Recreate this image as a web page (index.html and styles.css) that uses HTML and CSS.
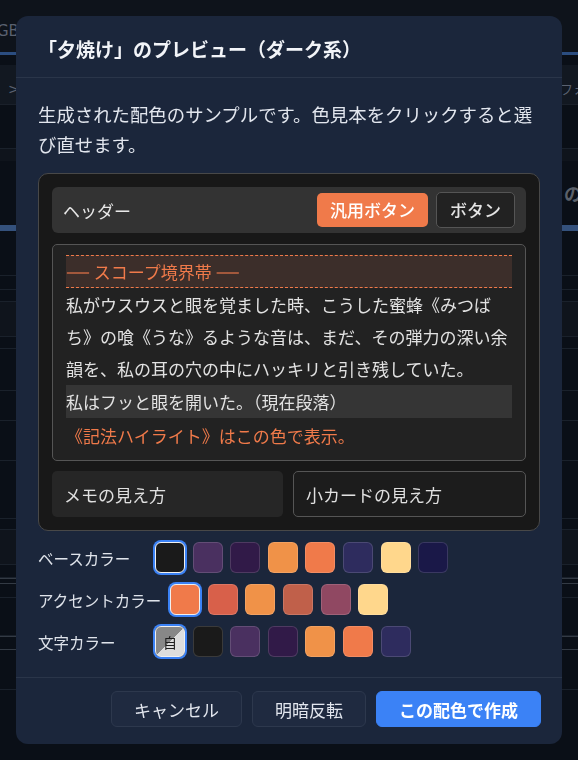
FILE: index.html
```html
<!DOCTYPE html>
<html lang="ja">
<head>
<meta charset="utf-8">
<title>プレビュー</title>
<link rel="stylesheet" href="styles.css">
</head>
<body>
<div class="app">
  <div class="app-top"><span class="app-gb">GB</span></div>
  <div class="app-tabline"></div>
  <div class="app-tabs"><span class="app-chev">&gt;</span><span class="app-fo">フォ</span></div>
  <div class="app-row h30"></div>
  <div class="app-row h14 line"></div>
  <div class="app-row h12 light"></div>
  <div class="app-row h64"><span class="app-no">の</span></div>
  <div class="app-sel"></div>
  <div class="app-row h45 line"></div>
  <div class="app-row h14 line"></div>
  <div class="app-row h12 line"></div>
  <div class="app-row h35 light line"></div>
  <div class="app-row h12 line"></div>
  <div class="app-row h42 line"></div>
  <div class="app-row h30 line"></div>
  <div class="app-row h40 line"></div>
  <div class="app-row h58 line"></div>
  <div class="app-row h11 line"></div>
  <div class="app-row h35 light line"></div>
  <div class="app-row h13 line"></div>
  <div class="app-row h6 dbl"></div>
  <div class="app-row h14 line"></div>
  <div class="app-row h38 line"></div>
  <div class="app-row h14 dbl"></div>
  <div class="app-row h40 line"></div>
</div>

<div class="overlay">
  <div class="modal">
    <div class="modal-head">
      <h2 class="modal-title">「夕焼け」のプレビュー（ダーク系）</h2>
    </div>
    <div class="modal-body">
      <p class="desc">生成された配色のサンプルです。色見本をクリックすると選び直せます。</p>

      <div class="preview">
        <div class="pv-header">
          <span class="pv-header-title">ヘッダー</span>
          <div class="pv-btns">
            <button class="pv-btn pv-btn-primary">汎用ボタン</button>
            <button class="pv-btn pv-btn-secondary">ボタン</button>
          </div>
        </div>

        <div class="pv-text">
          <div class="pv-scope"><span class="pv-dash">——</span> スコープ境界帯 <span class="pv-dash">——</span></div>
          <p class="pv-para">私がウスウスと眼を覚ました時、こうした蜜蜂《みつば<br>ち》の喰《うな》るような音は、まだ、その弾力の深い余韻を、私の耳の穴の中にハッキリと引き残していた。</p>
          <p class="pv-para pv-current">私はフッと眼を開いた。（現在段落）</p>
          <p class="pv-para pv-hl">《記法ハイライト》はこの色で表示。</p>
        </div>

        <div class="pv-cards">
          <div class="pv-memo">メモの見え方</div>
          <div class="pv-card">小カードの見え方</div>
        </div>
      </div>

      <div class="swatch-rows">
        <div class="swatch-row">
          <span class="swatch-label">ベースカラー</span>
          <div class="swatch-list">
            <span class="swatch selected c-1a"></span>
            <span class="swatch c-4a"></span>
            <span class="swatch c-30"></span>
            <span class="swatch c-f09"></span>
            <span class="swatch c-f07"></span>
            <span class="swatch c-2e"></span>
            <span class="swatch c-ffd"></span>
            <span class="swatch c-1a4"></span>
          </div>
        </div>
        <div class="swatch-row">
          <span class="swatch-label">アクセントカラー</span>
          <div class="swatch-list">
            <span class="swatch selected c-f07"></span>
            <span class="swatch c-d86"></span>
            <span class="swatch c-f09"></span>
            <span class="swatch c-c06"></span>
            <span class="swatch c-904"></span>
            <span class="swatch c-ffd"></span>
          </div>
        </div>
        <div class="swatch-row">
          <span class="swatch-label">文字カラー</span>
          <div class="swatch-list">
            <span class="swatch selected swatch-auto"><span class="swatch-auto-text">自</span></span>
            <span class="swatch c-1a"></span>
            <span class="swatch c-4a"></span>
            <span class="swatch c-30"></span>
            <span class="swatch c-f09"></span>
            <span class="swatch c-f07"></span>
            <span class="swatch c-2e"></span>
          </div>
        </div>
      </div>
    </div>
    <div class="modal-foot">
      <button class="foot-btn foot-btn-secondary">キャンセル</button>
      <button class="foot-btn foot-btn-secondary">明暗反転</button>
      <button class="foot-btn foot-btn-primary">この配色で作成</button>
    </div>
  </div>
</div>
</body>
</html>
```

FILE: styles.css
```css
* { box-sizing: border-box; }

html, body {
  margin: 0;
  padding: 0;
  height: 100%;
  overflow: hidden;
}

body {
  background: #0a0f17;
  font-family: "Noto Sans CJK JP", "Noto Sans", sans-serif;
  color: #e2e6ee;
}

/* ---------- dimmed app behind ---------- */
.app {
  display: flex;
  flex-direction: column;
  background: #0a0f17;
}
.app-top {
  height: 52px;
  background: #0e131b;
  display: flex;
  align-items: center;
  padding-top: 10px;
}
.app-gb {
  margin-left: -3px;
  font-family: "DejaVu Sans", sans-serif;
  font-size: 15px;
  color: #5a6170;
}
.app-tabline {
  height: 3px;
  background: #2b4d80;
}
.app-tabs {
  height: 40px;
  background: #121821;
  border-bottom: 1px solid #1a202a;
  display: flex;
  align-items: center;
  justify-content: space-between;
  padding-top: 8px;
  margin-top: 10px;
}
.app-chev {
  margin-left: 8px;
  color: #5a6170;
  font-family: "DejaVu Sans", sans-serif;
  font-size: 14px;
}
.app-fo {
  margin-right: -8px;
  color: #5a6170;
  font-size: 13px;
}
.app-row {
  border-bottom: 1px solid transparent;
}
.app-row.line { border-bottom-color: #1a212b; }
.app-row.light { background: #0f141c; }
.app-row.dbl {
  border-top: 1px solid #333a44;
  border-bottom: 1px solid #333a44;
}
.h6 { height: 6px; }
.h11 { height: 11px; }
.h12 { height: 12px; }
.h13 { height: 13px; }
.h14 { height: 14px; }
.h30 { height: 30px; }
.h35 { height: 35px; }
.h38 { height: 38px; }
.h40 { height: 40px; }
.h42 { height: 42px; }
.h45 { height: 45px; }
.h58 { height: 58px; }
.h64 {
  height: 64px;
  display: flex;
  justify-content: flex-end;
  align-items: center;
}
.app-no {
  margin-right: -4px;
  font-size: 18px;
  font-weight: 700;
  color: #5a606a;
}
.app-sel {
  height: 6px;
  background: #34517c;
}

/* ---------- overlay / modal ---------- */
.overlay {
  position: fixed;
  inset: 0;
  display: flex;
  align-items: center;
  justify-content: center;
  padding: 16px;
}
.modal {
  width: 100%;
  height: 100%;
  background: #1b263b;
  border-radius: 12px;
  display: flex;
  flex-direction: column;
  overflow: hidden;
}
.modal-head {
  padding: 20px 22px 15px;
  border-bottom: 1px solid #2a3549;
}
.modal-title {
  margin: 0;
  font-size: 19px;
  line-height: 26px;
  font-weight: 700;
  color: #f2f4f8;
}
.modal-body {
  flex: 1;
  padding: 21px 22px 0;
  display: flex;
  flex-direction: column;
}
.desc {
  margin: 0 0 14px;
  font-size: 18.4px;
  line-height: 30px;
  color: #e2e6ee;
}

/* ---------- preview ---------- */
.preview {
  background: #181818;
  border: 1px solid #484848;
  border-radius: 10px;
  padding: 13px 13px 13px;
  display: flex;
  flex-direction: column;
  gap: 10px;
}
.pv-header {
  height: 46px;
  background: #333333;
  border-radius: 6px;
  display: flex;
  align-items: center;
  justify-content: space-between;
  padding: 0 11px 0 11px;
  margin-bottom: 1px;
}
.pv-header-title {
  font-size: 17px;
  color: #e8e8e8;
}
.pv-btns {
  display: flex;
  align-items: center;
  gap: 8px;
}
.pv-btn {
  font-family: inherit;
  font-size: 17px;
  line-height: 24px;
  padding: 0 13px;
  border-radius: 5px;
  cursor: pointer;
}
.pv-btn-primary {
  height: 34px;
  background: #f07a4a;
  border: none;
  color: #ffffff;
  font-weight: 500;
}
.pv-btn-secondary {
  height: 36px;
  background: #222222;
  border: 1px solid #555555;
  color: #e4e4e4;
  font-weight: 500;
}

.pv-text {
  background: #222222;
  border: 1px solid #555555;
  border-radius: 5px;
  padding: 10px 13px 8px;
}
.pv-scope {
  height: 33px;
  background: #3c2e2a;
  border-top: 1px dashed #f07a4a;
  border-bottom: 1px dashed #f07a4a;
  color: #f07a4a;
  font-size: 17px;
  line-height: 31px;
  margin-bottom: 1px;
}
.pv-dash {
  font-size: 12px;
  font-weight: 700;
  vertical-align: 1px;
  text-shadow: 0 1px 0 currentColor;
}
.pv-para {
  margin: 0;
  font-size: 17px;
  line-height: 32px;
  color: #e2e2e2;
}
.pv-current {
  background: #353535;
  line-height: 33px;
}
.pv-hl {
  color: #f07a4a;
  margin-top: 2px;
}

.pv-cards {
  display: grid;
  grid-template-columns: 231px 1fr;
  gap: 10px;
}
.pv-memo,
.pv-card {
  height: 46px;
  display: flex;
  align-items: center;
  padding: 0 12px;
  font-size: 17px;
  color: #e0e0e0;
  border-radius: 5px;
}
.pv-memo {
  background: #262626;
}
.pv-card {
  background: #1c1c1c;
  border: 1px solid #555555;
}

/* ---------- swatches ---------- */
.swatch-rows {
  margin-top: 11px;
  display: flex;
  flex-direction: column;
  gap: 11px;
}
.swatch-row {
  display: flex;
  align-items: center;
  gap: 9px;
}
.swatch-label {
  min-width: 108px;
  font-size: 15.5px;
  color: #dfe3ea;
  white-space: nowrap;
}
.swatch-list {
  display: flex;
  gap: 7.6px;
}
.swatch {
  width: 30px;
  height: 31px;
  border-radius: 6px;
  border: 1px solid rgba(255, 255, 255, 0.14);
  display: flex;
  align-items: center;
  justify-content: center;
}
.swatch.selected {
  border: 1px solid #f0f0f0;
  box-shadow: 0 0 0 2px #3b82f6;
}
.c-1a { background: #1a1a1a; }
.c-4a { background: #4a3060; }
.c-30 { background: #311a48; }
.c-f09 { background: #f09248; }
.c-f07 { background: #f07a4a; }
.c-2e { background: #2e2c5e; }
.c-ffd { background: #ffd78c; }
.c-1a4 { background: #1a1848; }
.c-d86 { background: #d8604a; }
.c-c06 { background: #c0604a; }
.c-904 { background: #904862; }
.swatch-auto {
  background: linear-gradient(135deg, #888888 50%, #dddddd 50%);
}
.swatch-auto-text {
  font-size: 14px;
  line-height: 1;
  color: #1e1e1e;
}

/* ---------- footer ---------- */
.modal-foot {
  border-top: 1px solid #2a3549;
  padding: 13px 21px 17px;
  display: flex;
  justify-content: flex-end;
  gap: 10px;
}
.foot-btn {
  height: 36px;
  padding: 0 22px;
  font-family: inherit;
  font-size: 17px;
  border-radius: 6px;
  cursor: pointer;
}
.foot-btn-secondary {
  background: #1f2a40;
  border: 1px solid #2d384d;
  color: #e2e6ee;
}
.foot-btn-primary {
  background: #3b82f6;
  border: 1px solid #3b82f6;
  color: #ffffff;
  font-weight: 700;
}
```
